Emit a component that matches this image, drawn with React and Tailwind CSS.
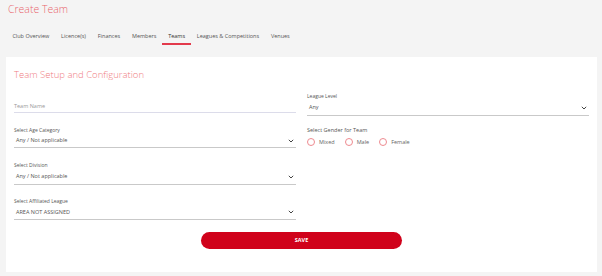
import React from "react";

const tabs = ["Club Overview", "Licence(s)", "Finances", "Members", "Teams", "Leagues & Competitions", "Venues"];

function Chevron() {
  return (
    <svg width="6" height="4" viewBox="0 0 6 4" className="shrink-0">
      <polyline points="0.8,0.8 3,3 5.2,0.8" fill="none" stroke="#444" strokeWidth="1" />
    </svg>
  );
}

function SelectField({ label, value, className = "", rowH = "h-[14px]" }) {
  return (
    <div className={className}>
      <div className="text-[5px] leading-[8px] text-[#555]">{label}</div>
      <div className={`flex items-center justify-between ${rowH} border-b border-[#c9c9c9] pl-[2px] pr-[2px]`}>
        <span className="text-[5.5px] text-[#555]">{value}</span>
        <Chevron />
      </div>
    </div>
  );
}

function Radio({ label }) {
  return (
    <label className="flex items-center gap-[4px]">
      <span className="w-[8px] h-[8px] rounded-full border border-[#ee8a90]" />
      <span className="text-[5.5px] text-[#666]">{label}</span>
    </label>
  );
}

export default function App() {
  return (
    <div className="min-h-screen bg-[#f4f4f4] font-['Open_Sans',sans-serif] pl-[6px] pr-[5px]">
      <h1 className="pl-[2px] text-[10.5px] leading-[18px] font-light text-[#e9656d]">Create Team</h1>

      <nav className="flex mt-[11px] pl-[0.5px]">
        {tabs.map((t) => (
          <div
            key={t}
            className={`px-[5.9px] text-[5.5px] leading-[14px] border-b-2 ${
              t === "Teams" ? "border-[#e33a4c] text-[#333]" : "border-transparent text-[#555]"
            }`}
          >
            {t}
          </div>
        ))}
      </nav>

      <div className="mt-[12px] bg-white h-[215px] px-[8px] pt-[10px]">
        <h2 className="text-[9.5px] leading-[16px] font-light text-[#ef7c82]">Team Setup and Configuration</h2>

        <div className="flex gap-[11px]">
          <div className="flex-1">
            <div className="mt-[17px] h-[13px] border-b border-[#dcdcea] flex items-center">
              <span className="text-[5.5px] text-[#999]">Team Name</span>
            </div>
            <SelectField className="mt-[13px]" label="Select Age Category" value="Any / Not applicable" rowH="h-[14px]" />
            <SelectField className="mt-[13px]" label="Select Division" value="Any / Not applicable" rowH="h-[16px]" />
            <SelectField className="mt-[12px]" label="Select Affiliated League" value="AREA NOT ASSIGNED" rowH="h-[15px]" />
          </div>

          <div className="flex-1">
            <SelectField className="mt-[9px]" label="League Level" value="Any" rowH="h-[16px]" />
            <div className="mt-[10px]">
              <div className="text-[5.5px] leading-[8px] text-[#555]">Select Gender for Team</div>
              <div className="flex gap-[10px] mt-[4px]">
                <Radio label="Mixed" />
                <Radio label="Male" />
                <Radio label="Female" />
              </div>
            </div>
          </div>
        </div>

        <div className="flex justify-center mt-[12px]">
          <button className="w-[201px] h-[17px] rounded-full bg-[#d0021b] text-white text-[5.5px] font-bold">
            SAVE
          </button>
        </div>
      </div>
    </div>
  );
}
